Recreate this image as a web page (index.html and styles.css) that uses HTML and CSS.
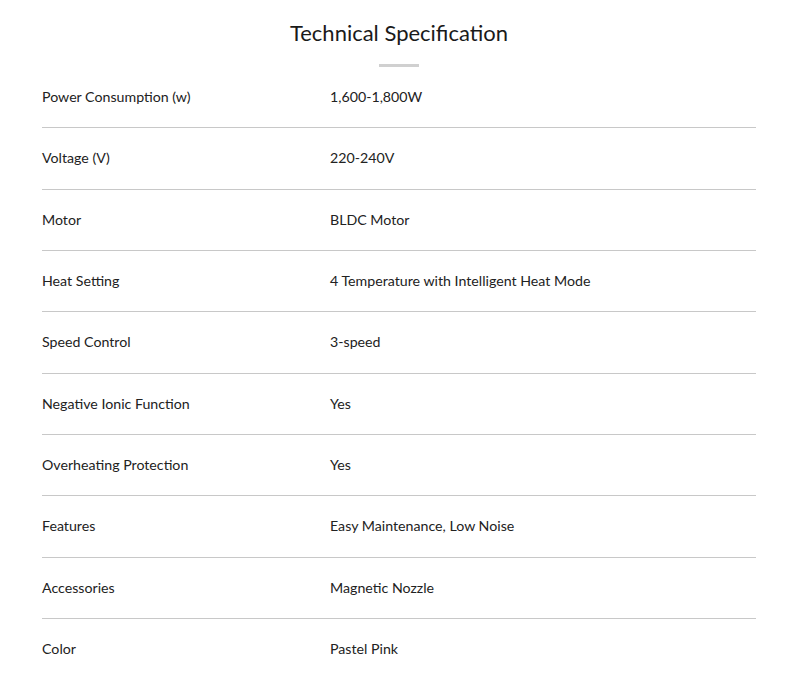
FILE: index.html
```html
<!DOCTYPE html>
<html>
<head>
<meta charset="utf-8">
<link rel="stylesheet" href="styles.css">
</head>
<body>
<section class="spec">
  <h2 class="spec-title">Technical Specification</h2>
  <div class="spec-bar"></div>
  <div class="spec-table">
    <div class="row"><div class="label">Power Consumption (w)</div><div class="value">1,600-1,800W</div></div>
    <div class="row"><div class="label">Voltage (V)</div><div class="value">220-240V</div></div>
    <div class="row"><div class="label">Motor</div><div class="value">BLDC Motor</div></div>
    <div class="row"><div class="label">Heat Setting</div><div class="value">4 Temperature with Intelligent Heat Mode</div></div>
    <div class="row"><div class="label">Speed Control</div><div class="value">3-speed</div></div>
    <div class="row"><div class="label">Negative Ionic Function</div><div class="value">Yes</div></div>
    <div class="row"><div class="label">Overheating Protection</div><div class="value">Yes</div></div>
    <div class="row"><div class="label">Features</div><div class="value">Easy Maintenance, Low Noise</div></div>
    <div class="row"><div class="label">Accessories</div><div class="value">Magnetic Nozzle</div></div>
    <div class="row last"><div class="label">Color</div><div class="value">Pastel Pink</div></div>
  </div>
</section>
</body>
</html>
```
FILE: styles.css
```css
html, body {
  margin: 0;
  padding: 0;
  background: #fff;
}
body {
  font-family: Lato, "Noto Sans", sans-serif;
  color: #222;
}
.spec {
  width: 714px;
  margin-left: 42px;
  padding-top: 18px;
  display: flex;
  flex-direction: column;
  align-items: center;
}
.spec-title {
  margin: 0;
  font-size: 22px;
  font-weight: 400;
  line-height: 30px;
  color: #1a1a1a;
}
.spec-bar {
  width: 40px;
  height: 3px;
  background: #d0d0d0;
  margin-top: 16px;
}
.spec-table {
  width: 100%;
}
.row {
  display: grid;
  grid-template-columns: 288px 1fr;
  padding: 20px 0;
  border-bottom: 1px solid #c8c8c8;
  font-size: 14.2px;
  line-height: 20.33px;
}
.row.last {
  border-bottom: none;
}
.label, .value {
  color: #222;
}
```
